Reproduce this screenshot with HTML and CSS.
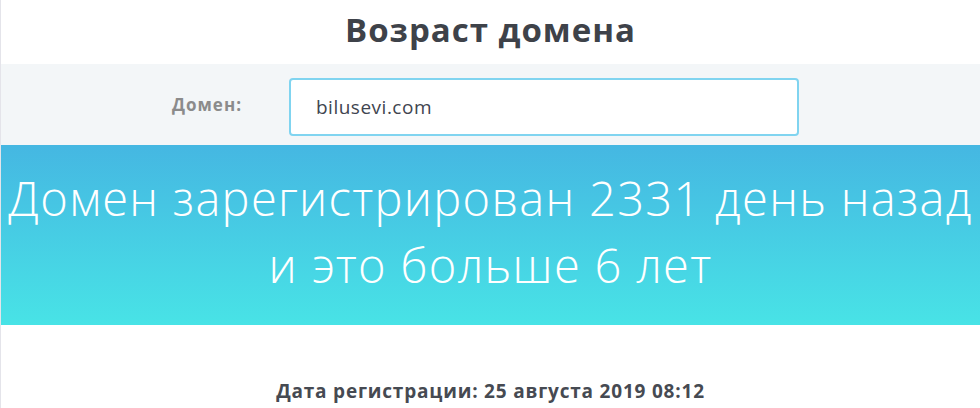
FILE: index.html
```html
<!DOCTYPE html>
<html lang="ru">
<head>
<meta charset="utf-8">
<title>Возраст домена</title>
<link rel="stylesheet" href="styles.css">
</head>
<body>
<div class="page">
  <header class="head">
    <h1 class="title">Возраст домена</h1>
  </header>
  <section class="form">
    <label class="label" for="domain">Домен:</label>
    <div class="input" id="domain">bilusevi.com</div>
  </section>
  <section class="result">
    <p class="result-text">Домен зарегистрирован 2331 день назад<br>и это больше 6 лет</p>
  </section>
  <section class="info">
    <p class="date">Дата регистрации: 25 августа 2019 08:12</p>
  </section>
</div>
</body>
</html>
```

FILE: styles.css
```css
html, body {
  margin: 0;
  padding: 0;
  background: #ffffff;
}
.page {
  border-left: 1px solid #e4e4ea;
  min-height: 408px;
  box-sizing: border-box;
  font-family: "Open Sans", Lato, sans-serif;
}
.head {
  height: 64px;
  display: flex;
  align-items: center;
  justify-content: center;
}
.title {
  margin: 0;
  font-size: 33px;
  font-weight: 700;
  letter-spacing: 1px;
  color: #3e4249;
  line-height: 1;
  padding-bottom: 6px;
}
.form {
  height: 81px;
  background: #f3f6f8;
  display: flex;
  align-items: center;
  padding-left: 171px;
  box-sizing: border-box;
}
.label {
  width: 117px;
  font-size: 17px;
  font-weight: 700;
  letter-spacing: 1px;
  color: #8b8b8b;
}
.input {
  width: 510px;
  height: 58px;
  box-sizing: border-box;
  border: 2px solid #80d4f0;
  border-radius: 4px;
  background: #ffffff;
  padding-left: 25px;
  display: flex;
  align-items: center;
  font-size: 19px;
  font-weight: 400;
  letter-spacing: 0.5px;
  color: #3f4550;
  margin-top: 5px;
}
.result {
  height: 180px;
  background: linear-gradient(to bottom, #45b7e2 0%, #48e3e6 100%);
  display: flex;
  align-items: center;
  justify-content: center;
}
.result-text {
  margin: 0;
  text-align: center;
  color: #ffffff;
  font-size: 47px;
  font-weight: 300;
  letter-spacing: 1.3px;
  line-height: 67px;
  padding-bottom: 6px;
}
.info {
  padding-top: 53px;
}
.date {
  margin: 0;
  text-align: center;
  font-size: 19px;
  font-weight: 700;
  letter-spacing: 0.8px;
  color: #464a52;
}
```
